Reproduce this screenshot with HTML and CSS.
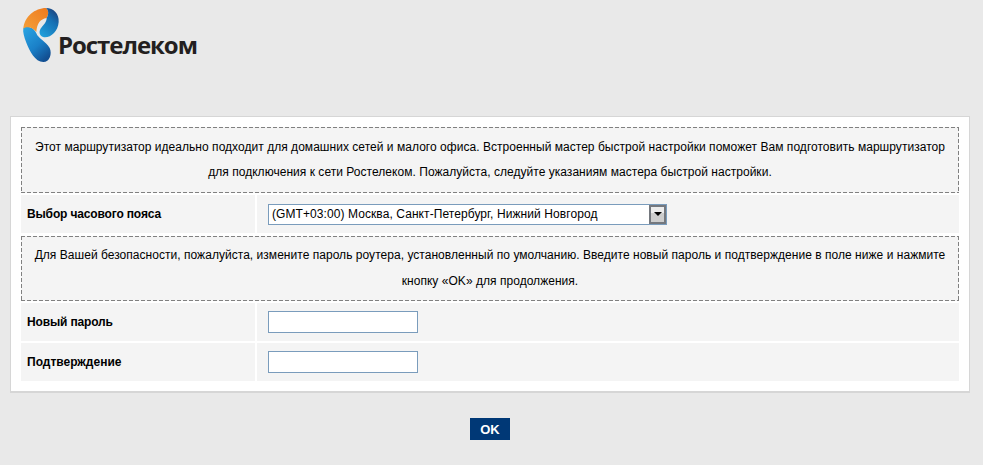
FILE: index.html
```html
<!DOCTYPE html>
<html lang="ru">
<head>
<meta charset="utf-8">
<title>Ростелеком</title>
<link rel="stylesheet" href="styles.css">
</head>
<body>
<header class="header">
  <svg class="logo-mark" viewBox="0 0 180 210" aria-hidden="true">
    <defs>
      <linearGradient id="gOrange" x1="0" y1="1" x2="1" y2="0">
        <stop offset="0" stop-color="#f4a23c"/>
        <stop offset="1" stop-color="#ee7a1e"/>
      </linearGradient>
      <linearGradient id="gRight" x1="0" y1="1" x2="0.6" y2="0">
        <stop offset="0" stop-color="#22a5e0"/>
        <stop offset="0.7" stop-color="#1670b4"/>
        <stop offset="1" stop-color="#1c4a86"/>
      </linearGradient>
      <linearGradient id="gLow" x1="0" y1="0" x2="0.7" y2="1">
        <stop offset="0" stop-color="#2ba6e4"/>
        <stop offset="0.6" stop-color="#1a80c8"/>
        <stop offset="1" stop-color="#124f92"/>
      </linearGradient>
    </defs>
    <path fill="url(#gLow)" d="M25 84C34 76 56 80 64 100C70 116 92 124 104 144C112 162 104 186 85 186C60 186 44 152 34 128C27 110 23 96 25 84Z"/>
    <path fill="url(#gOrange)" d="M25 86C28 50 60 24 93 24C102 30 101 45 95 54C76 57 66 70 64 96C54 82 36 78 25 86Z"/>
    <path fill="url(#gRight)" d="M93 24C116 24 133 42 131 66C129 96 104 116 84 111C71 106 71 92 80 82C86 74 95 66 95 54C101 45 102 30 93 24Z"/>
  </svg>
  <span class="logo-text">Ростелеком</span>
</header>
<main class="panel">
  <div class="note note-first">
    <p>Этот маршрутизатор идеально подходит для домашних сетей и малого офиса. Встроенный мастер быстрой настройки поможет Вам подготовить маршрутизатор для подключения к сети Ростелеком. Пожалуйста, следуйте указаниям мастера быстрой настройки.</p>
  </div>
  <div class="row row-zone">
    <label class="label label-tight" for="tz">Выбор часового пояса</label>
    <div class="value">
      <div class="select-wrap">
        <select class="select" id="tz">
          <option>(GMT+03:00) Москва, Санкт-Петербург, Нижний Новгород</option>
        </select>
        <span class="select-btn"><span class="select-arrow"></span></span>
      </div>
    </div>
  </div>
  <div class="note note-second">
    <p>Для Вашей безопасности, пожалуйста, измените пароль роутера, установленный по умолчанию. Введите новый пароль и подтверждение в поле ниже и нажмите кнопку «OK» для продолжения.</p>
  </div>
  <div class="row">
    <label class="label label-tight" for="pw">Новый пароль</label>
    <div class="value"><input class="input" id="pw" type="password"></div>
  </div>
  <div class="row">
    <label class="label" for="pw2">Подтверждение</label>
    <div class="value"><input class="input" id="pw2" type="password"></div>
  </div>
</main>
<div class="actions"><button class="ok" type="button">OK</button></div>
</body>
</html>
```
FILE: styles.css
```css
* { box-sizing: border-box; }
html, body { margin: 0; padding: 0; }
body {
  width: 983px;
  height: 465px;
  overflow: hidden;
  background: #e9e9e9;
  font-family: "Liberation Sans", Arial, sans-serif;
  font-size: 12px;
  color: #000;
}
.header {
  height: 116px;
  padding-left: 15px;
  display: flex;
  align-items: flex-start;
}
.logo-mark { width: 60px; height: 70px; flex: none; }
.logo-text {
  margin: 27px 0 0 -17px;
  font-family: "Open Sans", sans-serif;
  font-weight: 700;
  font-size: 24px;
  line-height: 36px;
  letter-spacing: -1.05px;
  color: #231f20;
}
.panel {
  margin: 0 0 0 10px;
  width: 960px;
  height: 277px;
  padding: 10px;
  background: #fff;
  border: 1px solid #d6d6d6;
  border-width: 1px 1px 2px;
}
.note {
  padding: 6px 11px 0;
  background-color: #f4f4f4;
  background-image:
    repeating-linear-gradient(90deg, #808080 0 4px, transparent 4px 6px),
    repeating-linear-gradient(90deg, #808080 0 4px, transparent 4px 6px),
    repeating-linear-gradient(180deg, #808080 0 4px, transparent 4px 6px),
    repeating-linear-gradient(180deg, #808080 0 4px, transparent 4px 6px);
  background-size: 100% 1px, 100% 1px, 1px 100%, 1px 100%;
  background-position: 0 0, 0 100%, 0 0, 100% 0;
  background-repeat: no-repeat;
  text-align: center;
  letter-spacing: 0.035px;
}
.note-first { height: 66px; padding-top: 8px; }
.note-first p { line-height: 25px; }
.note-second { height: 65px; margin-top: 3px; }
.note p { margin: 0; }
.note-second p { line-height: 26px; }
.row {
  display: flex;
  height: 38px;
  margin-top: 2px;
}
.label {
  width: 234px;
  padding-left: 6px;
  background: #f4f4f4;
  font-weight: bold;
  display: flex;
  align-items: center;
}
.label-tight { letter-spacing: -0.15px; }
.value {
  flex: 1;
  margin-left: 2px;
  padding-left: 11px;
  background: #f4f4f4;
  display: flex;
  align-items: center;
}
.select-wrap { position: relative; width: 399px; height: 21px; }
.select {
  appearance: none;
  display: block;
  width: 100%;
  height: 100%;
  margin: 0;
  padding: 0 0 0 3px;
  background: #fff;
  border: 1px solid #7a9cbc;
  border-radius: 0;
  font: 12px "Liberation Sans", Arial, sans-serif;
  letter-spacing: 0.08px;
  color: #000;
}
.select-btn {
  position: absolute;
  top: 1px;
  right: 1px;
  width: 17px;
  height: 19px;
  background: linear-gradient(#ececec, #ececec 42%, #cdcdcd 42%);
  border: 2px solid #74787e;
  display: flex;
  justify-content: center;
  padding-top: 5px;
}
.select-arrow {
  width: 0;
  height: 0;
  border-left: 4px solid transparent;
  border-right: 4px solid transparent;
  border-top: 4px solid #000;
}
.input {
  width: 150px;
  height: 22px;
  margin: 0;
  padding: 0 3px;
  background: #fff;
  border: 1px solid #7a9cbc;
  border-radius: 0;
  font: 12px "Liberation Sans", Arial, sans-serif;
}
.actions {
  display: flex;
  justify-content: center;
  padding-top: 25px;
  padding-right: 3px;
}
.ok {
  width: 40px;
  height: 22px;
  margin: 0;
  padding: 0;
  border: 0;
  background: #003876;
  color: #fff;
  font: bold 13px "Liberation Sans", Arial, sans-serif;
}
```
